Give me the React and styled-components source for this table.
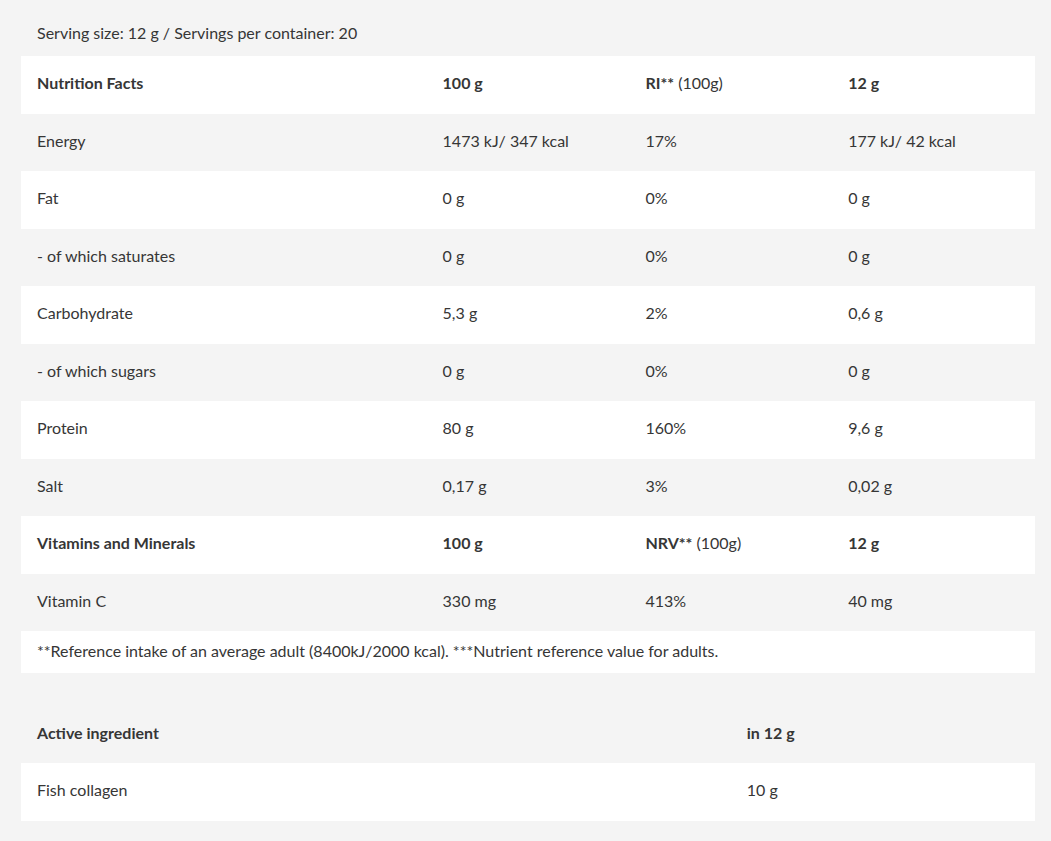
import React from "react";
import styled, { createGlobalStyle } from "styled-components";

const Global = createGlobalStyle`
  html, body { margin: 0; padding: 0; background: #f4f4f4; }
  body { font-family: Lato, "Open Sans", sans-serif; color: #363636; font-size: 16px; }
`;

const Page = styled.div`
  padding: 23px 16px 20px 21px;
`;

const Serving = styled.p`
  margin: 0 0 13.5px 16px;
  line-height: 19.5px;
`;

const Table = styled.table`
  width: 1014px;
  border-collapse: collapse;
  table-layout: fixed;
  margin-bottom: ${(p) => p.$mb || 0}px;
`;

const Row = styled.tr`
  background: ${(p) => (p.$white ? "#fff" : "transparent")};
`;

const Cell = styled.td`
  padding: ${(p) => (p.$compact ? "10px 16px 12px" : "17px 16px 21px")};
  line-height: 19.5px;
  font-weight: ${(p) => (p.$bold ? 700 : 400)};
  white-space: nowrap;
  vertical-align: middle;
  text-align: left;
`;

const Strong = styled.b`
  font-weight: 700;
`;

const nutrition = [
  ["Energy", "1473 kJ/ 347 kcal", "17%", "177 kJ/ 42 kcal"],
  ["Fat", "0 g", "0%", "0 g"],
  ["- of which saturates", "0 g", "0%", "0 g"],
  ["Carbohydrate", "5,3 g", "2%", "0,6 g"],
  ["- of which sugars", "0 g", "0%", "0 g"],
  ["Protein", "80 g", "160%", "9,6 g"],
  ["Salt", "0,17 g", "3%", "0,02 g"],
];

export default function App() {
  return (
    <Page>
      <Global />
      <Serving>Serving size: 12 g / Servings per container: 20</Serving>
      <Table $mb={33}>
        <colgroup>
          <col style={{ width: "40%" }} />
          <col style={{ width: "20%" }} />
          <col style={{ width: "20%" }} />
          <col style={{ width: "20%" }} />
        </colgroup>
        <tbody>
          <Row $white>
            <Cell $bold>Nutrition Facts</Cell>
            <Cell $bold>100 g</Cell>
            <Cell><Strong>RI**</Strong> (100g)</Cell>
            <Cell $bold>12 g</Cell>
          </Row>
          {nutrition.map((r, i) => (
            <Row key={r[0]} $white={i % 2 === 1}>
              {r.map((c, j) => (
                <Cell key={j}>{c}</Cell>
              ))}
            </Row>
          ))}
          <Row $white>
            <Cell $bold>Vitamins and Minerals</Cell>
            <Cell $bold>100 g</Cell>
            <Cell><Strong>NRV**</Strong> (100g)</Cell>
            <Cell $bold>12 g</Cell>
          </Row>
          <Row>
            <Cell>Vitamin C</Cell>
            <Cell>330 mg</Cell>
            <Cell>413%</Cell>
            <Cell>40 mg</Cell>
          </Row>
          <Row $white>
            <Cell $compact colSpan={4}>
              **Reference intake of an average adult (8400kJ/2000 kcal). ***Nutrient reference value for adults.
            </Cell>
          </Row>
        </tbody>
      </Table>
      <Table>
        <colgroup>
          <col style={{ width: "70%" }} />
          <col style={{ width: "30%" }} />
        </colgroup>
        <tbody>
          <Row>
            <Cell $bold>Active ingredient</Cell>
            <Cell $bold>in 12 g</Cell>
          </Row>
          <Row $white>
            <Cell>Fish collagen</Cell>
            <Cell>10 g</Cell>
          </Row>
        </tbody>
      </Table>
    </Page>
  );
}
